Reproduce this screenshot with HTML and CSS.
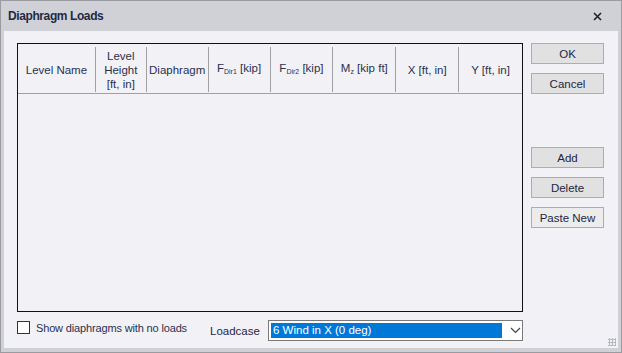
FILE: index.html
```html
<!DOCTYPE html>
<html lang="en">
<head>
  <meta charset="UTF-8">
  <title>Diaphragm Loads</title>
  <link rel="stylesheet" href="styles.css">
</head>
<body>

<div class="window">
  <div class="titlebar">
    <span class="title">Diaphragm Loads</span>
    <svg class="close" width="9" height="9" viewBox="0 0 9 9"><path d="M1 1 L8 8 M8 1 L1 8" stroke="#222" stroke-width="1.6"/></svg>
  </div>

  <div class="content">
    <div class="main">
      <div class="grid">
        <div class="grid-head">
          <div class="col c1"><span>Level Name</span></div>
          <div class="col c2"><span>Level<br>Height<br>[ft, in]</span></div>
          <div class="col c3"><span>Diaphragm</span></div>
          <div class="col c4"><span>F<sub>Dir1</sub> [kip]</span></div>
          <div class="col c5"><span>F<sub>Dir2</sub> [kip]</span></div>
          <div class="col c6"><span>M<sub>z</sub> [kip ft]</span></div>
          <div class="col c7"><span>X [ft, in]</span></div>
          <div class="col c8"><span>Y [ft, in]</span></div>
        </div>
      </div>

      <div class="bottom">
        <label class="check"><span class="box"></span>Show diaphragms with no loads</label>
        <span class="lc-label">Loadcase</span>
        <div class="select">
          <span class="sel-text">6 Wind in X (0 deg)</span>
          <svg class="arrow" width="11" height="7" viewBox="0 0 11 7"><path d="M1 1 L5.5 5.5 L10 1" fill="none" stroke="#444" stroke-width="1.2"/></svg>
        </div>
      </div>
    </div>

    <div class="side">
      <button class="btn">OK</button>
      <button class="btn">Cancel</button>
      <div class="spacer"></div>
      <button class="btn">Add</button>
      <button class="btn">Delete</button>
      <button class="btn light">Paste New</button>
    </div>

    <div class="grip"></div>
  </div>
</div>

</body>
</html>
```

FILE: styles.css
```css
body {
  margin: 0;
  font-family: "Liberation Sans", Arial, sans-serif;
  font-size: 11px;
  color: #1e2640;
  background: #d0d1d6;
}

.window {
  width: 622px;
  height: 353px;
  box-sizing: border-box;
  border: 1px solid #9a9ba0;
  background: #d0d1d6;
  display: flex;
  flex-direction: column;
}

.titlebar {
  height: 30px;
  display: flex;
  align-items: center;
  justify-content: space-between;
  padding: 0 19px 0 7px;
}

.title {
  font-weight: bold;
  font-size: 12px;
  color: #1e2a44;
  letter-spacing: -0.4px;
}

.content {
  position: relative;
  margin: 0 3px 4px 3px;
  flex: 1;
  background: #f2f2f6;
  display: flex;
  padding: 12px 0 0 13px;
}

.main {
  width: 506px;
  display: flex;
  flex-direction: column;
}

.grid {
  height: 267px;
  border: 1px solid #111;
  background: #f2f2f6;
}

.grid-head {
  height: 49px;
  display: flex;
  border-bottom: 1px solid #a0a0a0;
}

.col {
  display: flex;
  align-items: center;
  justify-content: center;
  text-align: center;
  line-height: 14px;
  margin: 3px 0 1px 0;
  border-right: 1px solid #a0a0a0;
  color: #2a3050;
  white-space: nowrap;
  font-size: 11.5px;
}

.col sub {
  font-size: 7px;
  vertical-align: -2px;
}

.c1 { width: 77px; }
.c2 { width: 50px; }
.c3 { width: 61px; }
.c4 { width: 61px; }
.c5 { width: 62px; }
.c6 { width: 62px; }
.c7 { width: 62px; }
.c8 { width: 63px; border-right: none; }

.bottom {
  display: flex;
  align-items: center;
  margin-top: 8px;
  height: 21px;
}

.check {
  display: flex;
  align-items: center;
  width: 193px;
  margin-top: -6px;
  color: #2a3050;
  white-space: nowrap;
  letter-spacing: -0.15px;
}

.box {
  width: 11px;
  height: 11px;
  border: 1px solid #333;
  background: #fff;
  margin-right: 6px;
}

.lc-label {
  width: 58px;
  margin-top: 1px;
  font-size: 11.5px;
}

.select {
  flex: 1;
  height: 19px;
  border: 1px solid #7a7a7a;
  background: #fff;
  display: flex;
  align-items: center;
}

.sel-text {
  background: #0078d7;
  color: #fff;
  height: 15px;
  line-height: 15px;
  margin-left: 2px;
  padding-left: 2px;
  width: 229px;
  font-size: 11.5px;
}

.arrow {
  margin-left: 8px;
}

.side {
  margin-left: 8px;
  display: flex;
  flex-direction: column;
}

.btn {
  width: 73px;
  height: 21px;
  margin-bottom: 9px;
  border: 1px solid #adadad;
  background: #e1e1e1;
  font-family: "Liberation Sans", Arial, sans-serif;
  font-size: 11.5px;
  color: #1e2640;
  padding: 0;
}

.btn.light {
  background: #ececec;
  margin-bottom: 0;
}

.spacer {
  height: 44px;
}

.grip {
  position: absolute;
  right: 2px;
  bottom: 2px;
  width: 8px;
  height: 8px;
  background-image: radial-gradient(#b8b8bc 1px, transparent 1.2px);
  background-size: 3px 3px;
}
```
